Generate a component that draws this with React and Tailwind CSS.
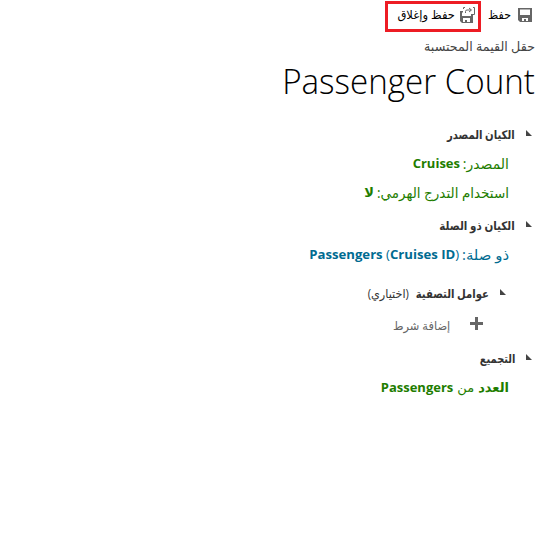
import React from "react";

const ARABIC = "font-['Open_Sans','DejaVu_Sans',sans-serif]";

function Disk() {
  return (
    <svg width="14" height="14" viewBox="0 0 14 14" className="shrink-0">
      <path fill="#666" fillRule="evenodd" d="M0 0h14v14H2L0 12zM2 1.500V7h10V1.500zM4 10v3h2V11h2v2h2V10z" />
    </svg>
  );
}

function DiskClose() {
  return (
    <svg width="16" height="17" viewBox="0 0 16 17" className="shrink-0">
      <path fill="#666" fillRule="evenodd" d="M0 5h3v1.500H2V10h9V8h2v9H2l-2-2zM3 12v4h2v-2h2v2h3V12z" />
      <path fill="none" stroke="#666" d="M5 1.500H3.500V3M13 1.500h1.500v7H13M5.500 7V5.500Q5.500 4 7 4h4M9 2l2.500 2L9 6" />
    </svg>
  );
}

function Section({ title, titleClass, note, className = "" }) {
  return (
    <div className={`flex h-5 items-center text-[12px] text-[#333] ${className}`}>
      <svg width="6" height="6" viewBox="0 0 6 6" className="mb-1 ml-[11px] shrink-0">
        <path fill="#444" d="M0 0v6h6z" />
      </svg>
      <span className={`origin-right font-bold ${titleClass}`}>{title}</span>
      {note && <span className="mr-[7px] origin-right scale-x-[0.94]">{note}</span>}
    </div>
  );
}

export default function App() {
  return (
    <main dir="rtl" className={`h-[555px] w-[554px] overflow-hidden bg-white whitespace-nowrap ${ARABIC}`}>
      <div className="flex h-8 items-start pr-[22px] text-[12px] text-black">
        <div className="flex h-[29px] items-center gap-[7px]"><Disk /><span className="w-[22px] origin-right scale-x-[0.92]">حفظ</span></div>
        <div className="mr-[8px] mt-px flex h-[31px] w-24 items-center gap-[5px] border-[3px] border-[#ed1c24] pr-[2px] pb-1"><DiskClose /><span className="origin-right scale-x-[0.96]">حفظ وإغلاق</span></div>
      </div>
      <div className="flex h-[29px] items-center pr-[19px] text-[12.7px] text-[#444]"><span>حقل القيمة المحتسبة</span></div>
      <h1 className="flex h-[40px] items-center pr-[19px] text-[35px] font-light text-black"><span className="origin-right scale-x-[0.947]">Passenger Count</span></h1>
      <Section title="الكيان المصدر" titleClass="scale-x-[0.84]" className="mt-[24px] pr-[22px]" />
      <div className="mt-[9px] flex h-5 items-center gap-1 pr-[45px] text-[13px] text-[#1e7d00]"><span className="w-[45px] pb-[2px] text-[14px]">المصدر:</span><b>Cruises</b></div>
      <div className="mt-[9px] flex h-5 items-center gap-1 pr-[45px] text-[13px] text-[#1e7d00]"><span className="w-[131px] origin-right scale-x-[0.965] pb-[2px] text-[14px]">استخدام التدرج الهرمي:</span><b>لا</b></div>
      <Section title="الكيان ذو الصلة" titleClass="scale-x-[0.86]" className="mt-[13px] pr-[22px]" />
      <div className="mt-[9px] flex h-5 items-center gap-1 pr-[45px] text-[13px] text-[#006b91]"><span className="w-[46px] origin-right scale-x-[1.06] pb-[2px] text-[14px]">ذو صلة:</span><span dir="ltr" className="origin-right scale-x-[1.012]"><b>Passengers</b> (<b>Cruises ID</b>)</span></div>
      <Section title="عوامل التصفية" titleClass="w-[73px] scale-x-[0.84]" note="(اختياري)" className="mt-[19px] pr-[48px]" />
      <div className="mt-[11px] flex h-5 items-center pr-[71px] text-[12px] text-[#666]">
        <svg width="13" height="13" viewBox="0 0 13 13" className="mb-1 ml-[20px] shrink-0"><path fill="#666" d="M5 0h3v5h5v3H8v5H5V8H0V5h5z" /></svg>
        <span className="origin-right scale-x-[0.95] pt-px">إضافة شرط</span>
      </div>
      <Section title="التجميع" titleClass="scale-x-[0.82]" className="mt-[14px] pr-[22px]" />
      <div className="mt-[9px] flex h-5 items-center gap-1 pr-[45px] text-[13px] text-[#1e7d00]"><b>العدد</b><span>من</span><b>Passengers</b></div>
    </main>
  );
}
